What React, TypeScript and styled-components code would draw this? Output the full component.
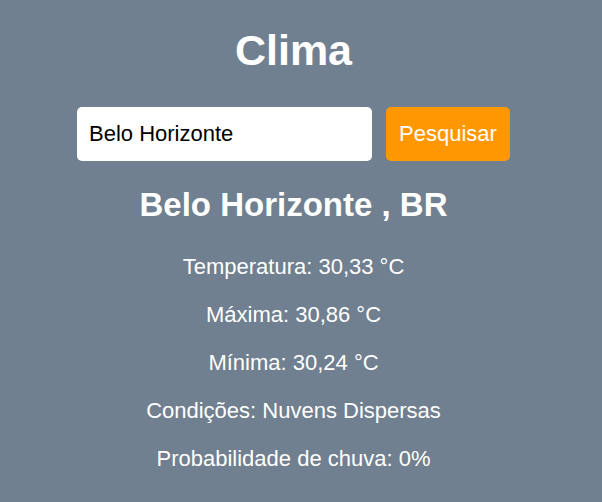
import React from "react";
import styled, { createGlobalStyle } from "styled-components";

const GlobalStyle = createGlobalStyle`
  html, body {
    margin: 0;
    padding: 0;
    background: #708090;
  }
  body {
    font-family: "Liberation Sans", Arial, sans-serif;
    color: #ffffff;
  }
`;

const Page = styled.main`
  box-sizing: border-box;
  width: 100%;
  min-height: 502px;
  padding: 25px 15px 0 0;
  display: flex;
  flex-direction: column;
  align-items: center;
  text-align: center;
`;

const Title = styled.h1`
  margin: 0;
  font-size: 43px;
  line-height: 50px;
  font-weight: 700;
`;

const SearchRow = styled.form`
  margin-top: 32px;
  display: flex;
  gap: 14px;
`;

const CityInput = styled.input`
  box-sizing: border-box;
  width: 295px;
  height: 54px;
  padding: 0 12px;
  border: none;
  border-radius: 5px;
  background: #ffffff;
  color: #000000;
  font-family: "Liberation Sans", Arial, sans-serif;
  font-size: 22px;
  outline: none;
`;

const SearchButton = styled.button`
  box-sizing: border-box;
  width: 124px;
  height: 54px;
  padding: 0;
  border: none;
  border-radius: 5px;
  background: #ff9800;
  color: #ffffff;
  font-family: "Liberation Sans", Arial, sans-serif;
  font-size: 22px;
  cursor: pointer;
`;

const CityName = styled.h2`
  margin: 25px 0 0;
  font-size: 33px;
  line-height: 38px;
  font-weight: 700;
`;

const InfoList = styled.div`
  margin-top: 30px;
  display: flex;
  flex-direction: column;
  align-items: center;
  gap: 22px;
`;

const InfoLine = styled.p`
  margin: 0;
  font-size: 22px;
  line-height: 26px;
`;

const info = [
  "Temperatura: 30,33 °C",
  "Máxima: 30,86 °C",
  "Mínima: 30,24 °C",
  "Condições: Nuvens Dispersas",
  "Probabilidade de chuva: 0%",
];

export default function App() {
  return (
    <>
      <GlobalStyle />
      <Page>
        <Title>Clima</Title>
        <SearchRow onSubmit={(e) => e.preventDefault()}>
          <CityInput defaultValue="Belo Horizonte" />
          <SearchButton type="submit">Pesquisar</SearchButton>
        </SearchRow>
        <CityName>Belo Horizonte , BR</CityName>
        <InfoList>
          {info.map((t) => (
            <InfoLine key={t}>{t}</InfoLine>
          ))}
        </InfoList>
      </Page>
    </>
  );
}
